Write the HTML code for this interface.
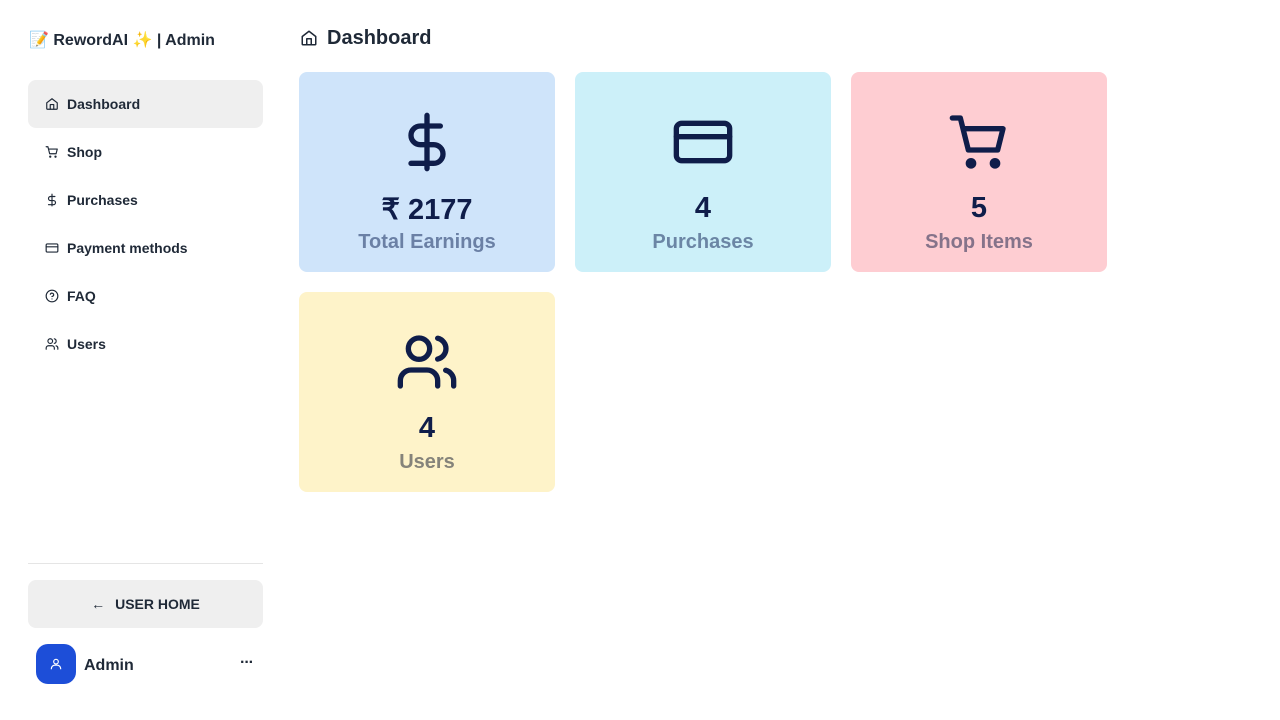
<!DOCTYPE html>
<html><head><meta charset="utf-8"><style>
*{box-sizing:border-box;margin:0;padding:0}
body{width:1280px;height:720px;background:#fff;font-family:"Liberation Sans","Noto Sans CJK SC",sans-serif;color:#1f2937;position:relative;overflow:hidden}
.brand{position:absolute;left:29px;top:30px;font-size:16px;font-weight:bold;color:#1f2937}
.nav{position:absolute;left:28px;top:80px;width:235px}
.item{height:48px;display:flex;align-items:center;padding-left:17px;font-size:14px;font-weight:bold;color:#1f2937;border-radius:8px}
.item svg{width:14px;height:14px;margin-right:8px;fill:none;stroke:#1f2937;stroke-width:2;stroke-linecap:round;stroke-linejoin:round}
.item.active{background:#efefef}
.hr{position:absolute;left:28px;top:563px;width:235px;border-top:1px solid #e5e5e5}
.uh{position:absolute;left:28px;top:580px;width:235px;height:48px;background:#efefef;border-radius:8px;display:flex;align-items:center;justify-content:center;font-size:14px;font-weight:bold;color:#1f2937}
.av{position:absolute;left:36px;top:644px;width:40px;height:40px;background:#1d4ed8;border-radius:12px;display:flex;align-items:center;justify-content:center}
.an{position:absolute;left:84px;top:657px;font-size:16px;font-weight:bold}
.dots{position:absolute;left:240px;top:654px;font-size:16px;font-weight:bold;letter-spacing:-1px}
h1{position:absolute;left:327px;top:27px;font-size:20px;font-weight:bold;color:#1f2937}
.card{position:absolute;width:256px;height:200px;border-radius:8px;text-align:center}
.card svg{position:absolute;left:96px;top:38px;width:64px;height:64px;fill:none;stroke:#0f1d4a;stroke-width:2;stroke-linecap:round;stroke-linejoin:round}
.num{position:absolute;left:0;right:0;top:120px;font-size:29px;font-weight:900;color:#0f1d4a}
.lab{position:absolute;left:0;right:0;top:159px;font-size:20px;font-weight:bold}
</style></head><body>
<div class="brand">📝 RewordAI ✨ | Admin</div>
<div class="nav">
<div class="item active"><svg viewBox="0 0 24 24"><path d="M3 10l9-7 9 7v10a1 1 0 0 1-1 1H4a1 1 0 0 1-1-1z"/><path d="M9 21v-8h6v8"/></svg>Dashboard</div>
<div class="item"><svg viewBox="0 0 24 24"><path d="M2 3h3l3 12h11l2-8H6"/><circle cx="9" cy="20" r="1"/><circle cx="18" cy="20" r="1"/></svg>Shop</div>
<div class="item"><svg viewBox="0 0 24 24"><path d="M12 2v20M17 6H9.5a3.5 3.5 0 0 0 0 7h5a3.5 3.5 0 0 1 0 7H6"/></svg>Purchases</div>
<div class="item"><svg viewBox="0 0 24 24"><rect x="2" y="5" width="20" height="14" rx="2"/><path d="M2 10h20"/></svg>Payment methods</div>
<div class="item"><svg viewBox="0 0 24 24"><circle cx="12" cy="12" r="10"/><path d="M9.1 9a3 3 0 0 1 5.8 1c0 2-3 3-3 3M12 17h.01"/></svg>FAQ</div>
<div class="item"><svg viewBox="0 0 24 24"><circle cx="9" cy="7" r="4"/><path d="M2 21v-2a4 4 0 0 1 4-4h6a4 4 0 0 1 4 4v2M16 3.1a4 4 0 0 1 0 7.8M22 21v-2a4 4 0 0 0-3-3.9"/></svg>Users</div>
</div>
<div class="hr"></div>
<div class="uh"><span style="margin-right:10px;font-weight:normal">←</span>USER HOME</div>
<div class="av"><svg width="14" height="14" viewBox="0 0 24 24" fill="none" stroke="#fff" stroke-width="2"><circle cx="12" cy="8" r="4"/><path d="M4 21v-1a6 6 0 0 1 6-6h4a6 6 0 0 1 6 6v1"/></svg></div>
<div class="an">Admin</div>
<div class="dots">···</div>
<svg style="position:absolute;left:300px;top:29px" width="18" height="18" viewBox="0 0 24 24" fill="none" stroke="#1f2937" stroke-width="2" stroke-linejoin="round"><path d="M3 10l9-7 9 7v10a1 1 0 0 1-1 1H4a1 1 0 0 1-1-1z"/><path d="M9 21v-8h6v8"/></svg>
<h1>Dashboard</h1>
<div class="card" style="left:299px;top:72px;background:#cfe4fa"><svg viewBox="0 0 24 24" stroke-width="1.6"><path d="M12 2v20M17 6H9.5a3.5 3.5 0 0 0 0 7h5a3.5 3.5 0 0 1 0 7H6"/></svg><div class="num">₹ 2177</div><div class="lab" style="color:#6b80a5">Total Earnings</div></div>
<div class="card" style="left:575px;top:72px;background:#ccf0f9"><svg viewBox="0 0 24 24" stroke-width="1.6"><rect x="2" y="5" width="20" height="14" rx="2"/><path d="M2 10h20"/></svg><div class="num">4</div><div class="lab" style="color:#6b86a5">Purchases</div></div>
<div class="card" style="left:851px;top:72px;background:#fecdd2"><svg viewBox="0 0 24 24" stroke-width="1.6"><path d="M2 3h3l3 12h11l2-8H6"/><circle cx="9" cy="20" r="1" fill="#0f1d4a"/><circle cx="18" cy="20" r="1" fill="#0f1d4a"/></svg><div class="num">5</div><div class="lab" style="color:#85738a">Shop Items</div></div>
<div class="card" style="left:299px;top:292px;background:#fef3c9"><svg viewBox="0 0 24 24" stroke-width="1.6"><circle cx="9" cy="7" r="4"/><path d="M2 21v-2a4 4 0 0 1 4-4h6a4 4 0 0 1 4 4v2M16 3.1a4 4 0 0 1 0 7.8M22 21v-2a4 4 0 0 0-3-3.9"/></svg><div class="num">4</div><div class="lab" style="color:#85837a">Users</div></div>
</body></html>
